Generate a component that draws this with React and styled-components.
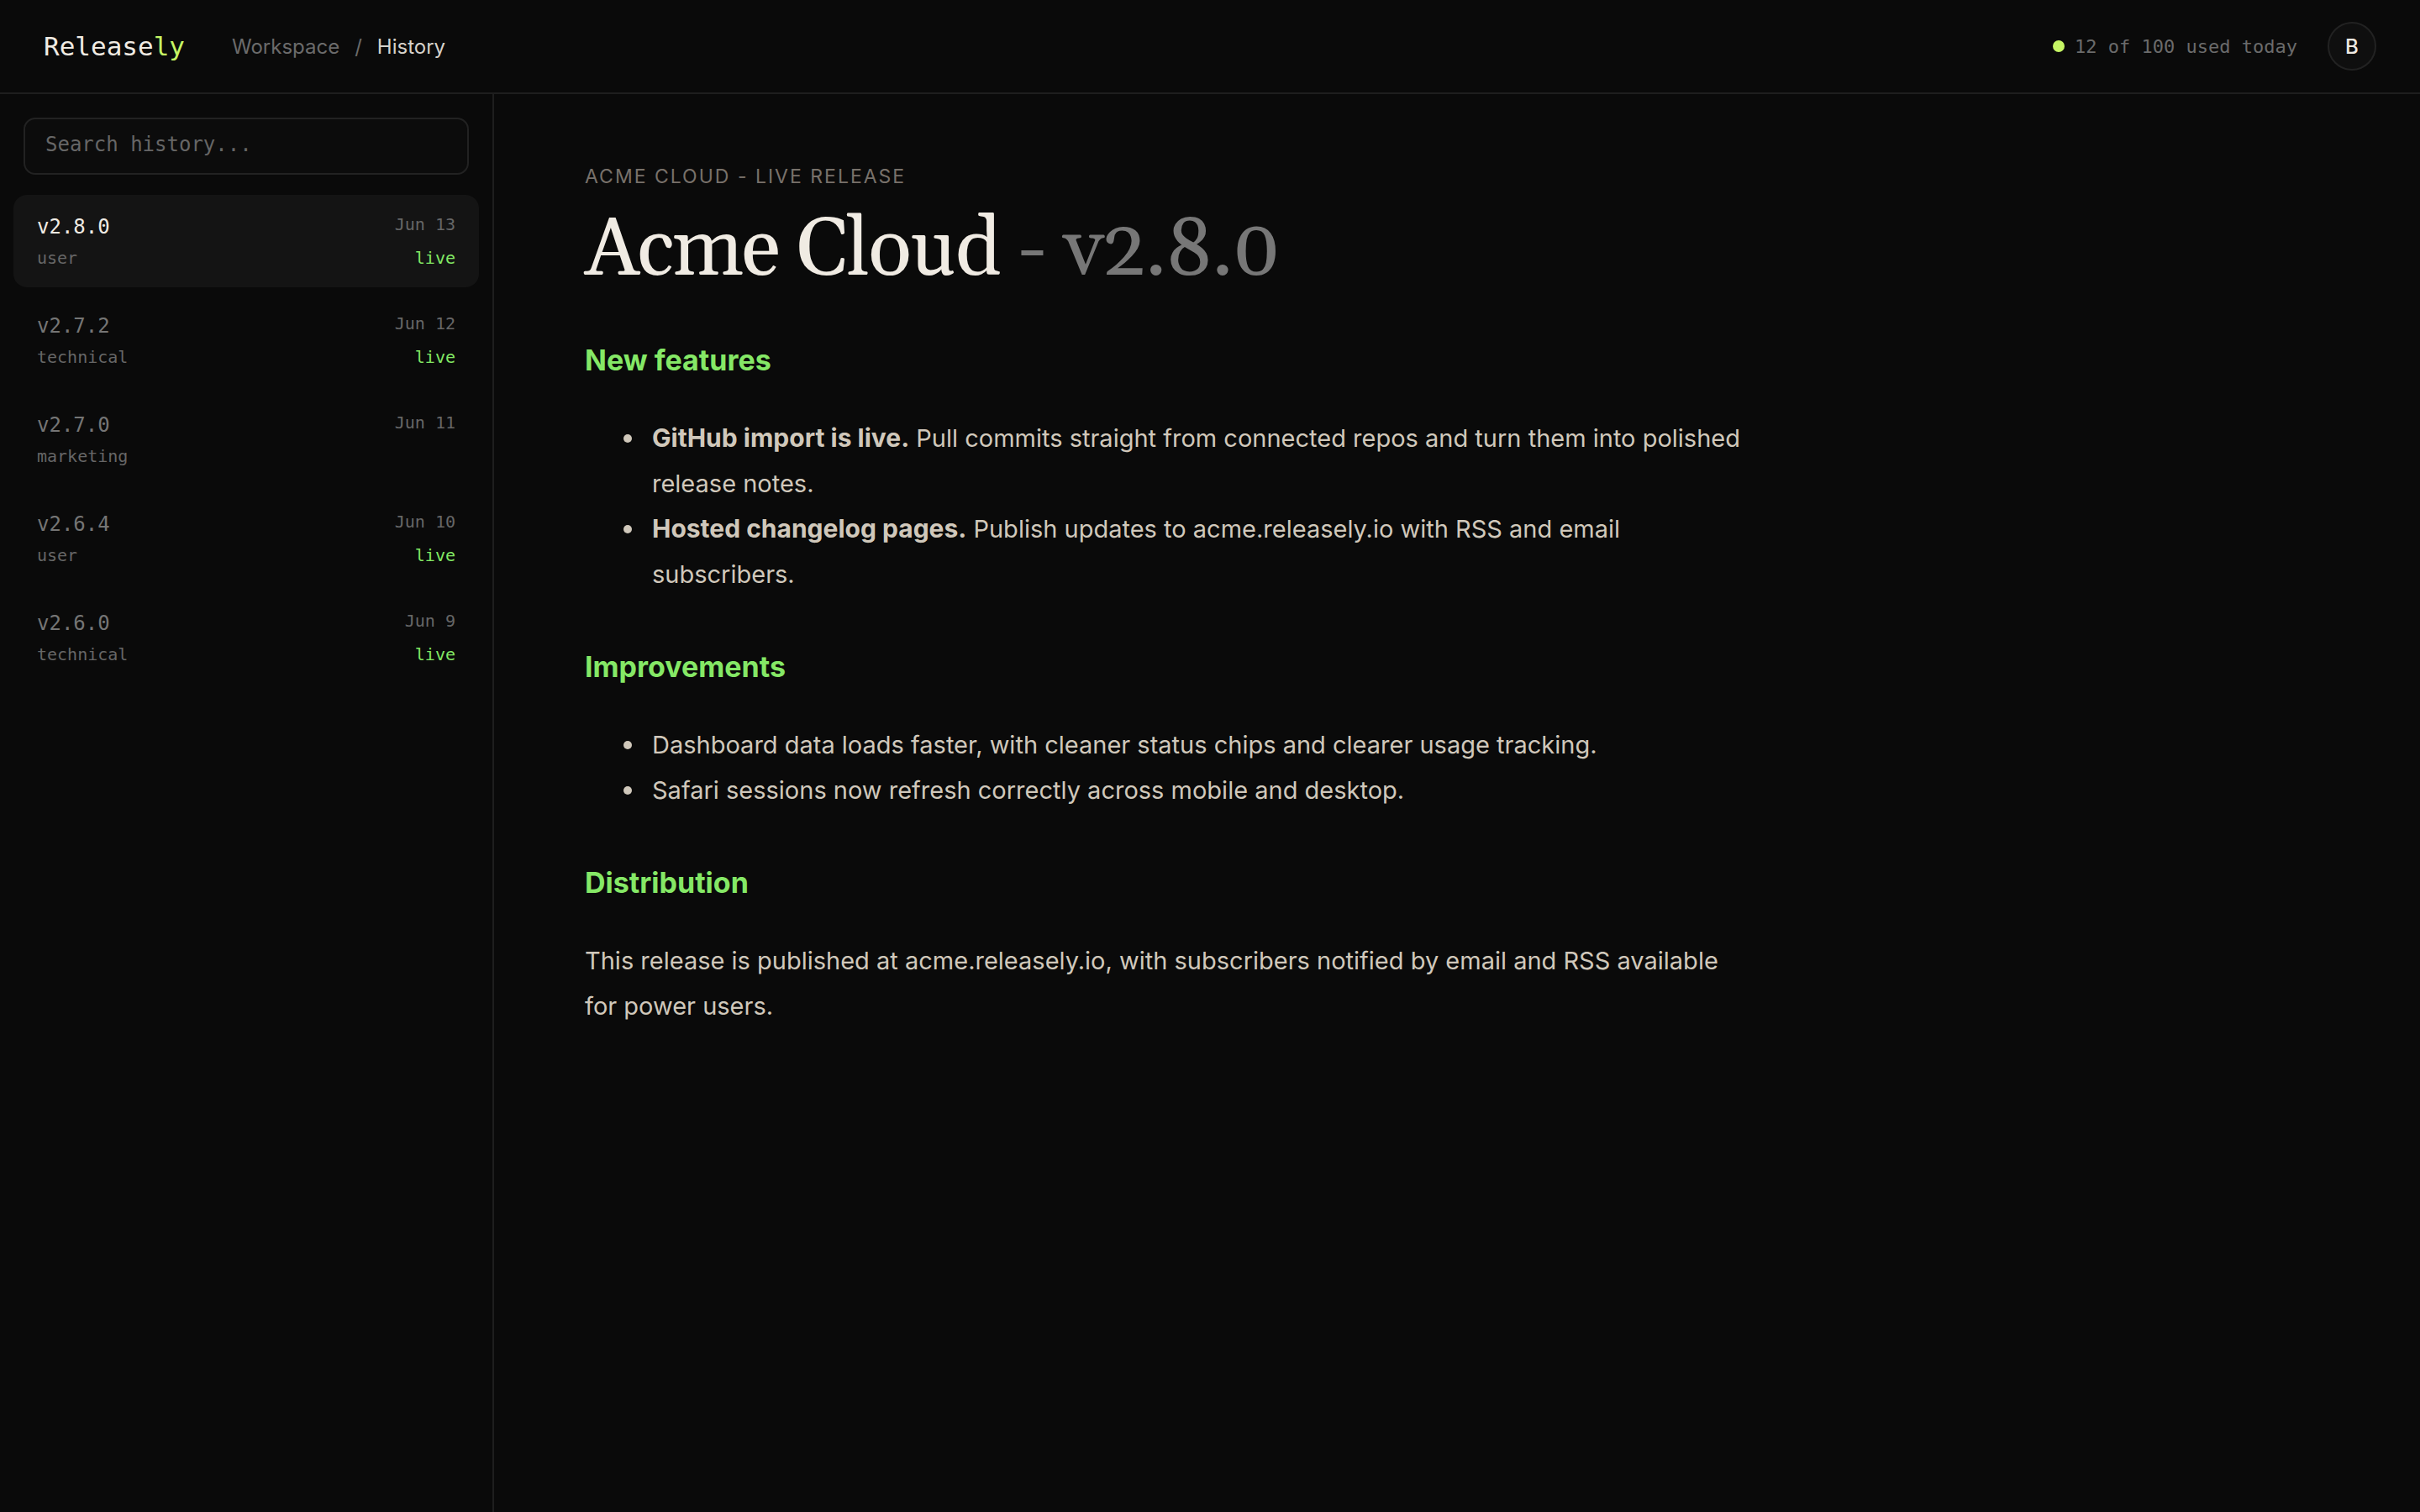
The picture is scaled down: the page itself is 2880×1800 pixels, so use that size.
import React, { useState } from "react";
import styled, { createGlobalStyle } from "styled-components";

const sans = `Inter, "Liberation Sans", sans-serif`;
const mono = `"DejaVu Sans Mono", "Liberation Mono", monospace`;
const serif = `Georgia, Gelasio, "Liberation Serif", serif`;

const GlobalStyle = createGlobalStyle`
  * {
    box-sizing: border-box;
  }

  body {
    margin: 0;
    background: #0a0a0a;
    color: #f0ebe3;
    font-family: ${sans};
  }
`;

const Page = styled.div`
  min-height: 100vh;
  display: flex;
  flex-direction: column;
`;

const Header = styled.header`
  height: 112px;
  padding: 0 52px;
  display: flex;
  align-items: center;
  border-bottom: 2px solid #1e1e1e;
`;

const Logo = styled.a`
  font-family: ${mono};
  font-size: 31px;
  color: #f0ebe3;
  text-decoration: none;
`;

const LogoAccent = styled.span`
  color: #c6f564;
`;

const Breadcrumb = styled.nav`
  margin-left: 56px;
  display: flex;
  gap: 18px;
  font-size: 24px;
  color: #6b6b6b;
`;

const CrumbLink = styled.a`
  color: inherit;
  text-decoration: none;
`;

const CrumbCurrent = styled.span`
  color: #d6d2cb;
`;

const HeaderRight = styled.div`
  margin-left: auto;
  display: flex;
  align-items: center;
  gap: 36px;
`;

const Usage = styled.div`
  display: flex;
  align-items: center;
  gap: 12px;
  font-family: ${mono};
  font-size: 22px;
  color: #6b6b6b;
`;

const UsageDot = styled.span`
  width: 14px;
  height: 14px;
  border-radius: 50%;
  background: #c6f564;
`;

const Avatar = styled.button`
  width: 58px;
  height: 58px;
  padding: 0;
  border: 2px solid #222222;
  border-radius: 50%;
  background: #0f0f0f;
  color: #f0ebe3;
  font-family: ${sans};
  font-size: 24px;
  font-weight: 500;
  cursor: pointer;
`;

const Body = styled.div`
  flex: 1;
  display: flex;
`;

const Sidebar = styled.aside`
  width: 588px;
  flex-shrink: 0;
  padding: 28px 16px;
  border-right: 2px solid #1e1e1e;
`;

const SearchBox = styled.div`
  padding: 0 12px;
  margin-bottom: 24px;
`;

const SearchInput = styled.input`
  width: 100%;
  height: 68px;
  padding: 0 24px 4px;
  border: 2px solid #222222;
  border-radius: 14px;
  background: #0c0c0c;
  color: #f0ebe3;
  font-family: ${mono};
  font-size: 24px;
  outline: none;

  &::placeholder {
    color: #666666;
    opacity: 1;
  }
`;

const ReleaseList = styled.ul`
  margin: 0;
  padding: 0;
  list-style: none;
  display: flex;
  flex-direction: column;
  gap: 8px;
`;

const ReleaseItem = styled.button`
  width: 100%;
  padding: 22px 28px;
  display: flex;
  flex-direction: column;
  gap: 8px;
  border: none;
  border-radius: 16px;
  background: ${({ $active }) => ($active ? "#141414" : "transparent")};
  color: ${({ $active }) => ($active ? "#f0ebe3" : "#757575")};
  font-family: ${mono};
  text-align: left;
  cursor: pointer;
`;

const ItemRow = styled.span`
  width: 100%;
  display: flex;
  justify-content: space-between;
  align-items: flex-start;
`;

const Version = styled.span`
  font-size: 24px;
  line-height: 32px;
`;

const Meta = styled.span`
  font-size: 20px;
  line-height: 26px;
  color: ${({ $live }) => ($live ? "#82e864" : "#666666")};
`;

const Main = styled.main`
  flex: 1;
  padding: 80px 108px;
`;

const Article = styled.article`
  max-width: 1386px;
  color: #d0c8bb;
  font-size: 29px;
  line-height: 54px;
`;

const Eyebrow = styled.p`
  margin: 0 0 18px;
  font-size: 23px;
  line-height: 36px;
  letter-spacing: 2px;
  text-transform: uppercase;
  color: #78716a;
`;

const Title = styled.h1`
  margin: 0 0 50px;
  font-family: ${serif};
  font-size: 96px;
  font-weight: 400;
  line-height: 106px;
  letter-spacing: -2px;
  color: #f0ebe3;
`;

const TitleVersion = styled.span`
  color: #777777;
`;

const Section = styled.section`
  & + & {
    margin-top: 56px;
  }
`;

const SectionTitle = styled.h2`
  margin: 0 0 39px;
  font-size: 34px;
  font-weight: 700;
  line-height: 54px;
  color: #85e866;
`;

const Notes = styled.ul`
  margin: 0;
  padding-left: 46px;
  list-style: none;
`;

const Note = styled.li`
  display: flex;
  gap: 24px;

  &::before {
    content: "";
    width: 10px;
    height: 10px;
    margin-top: 22px;
    flex-shrink: 0;
    border-radius: 50%;
    background: currentColor;
  }
`;

const Lead = styled.strong`
  font-size: 30px;
  font-weight: 700;
  line-height: 36px;
`;

const Paragraph = styled.p`
  margin: 0;
`;

const RELEASES = [
  { version: "v2.8.0", date: "Jun 13", audience: "user", live: true },
  { version: "v2.7.2", date: "Jun 12", audience: "technical", live: true },
  { version: "v2.7.0", date: "Jun 11", audience: "marketing", live: false },
  { version: "v2.6.4", date: "Jun 10", audience: "user", live: true },
  { version: "v2.6.0", date: "Jun 9", audience: "technical", live: true },
];

const SECTIONS = [
  {
    title: "New features",
    items: [
      {
        lead: "GitHub import is live.",
        text: "Pull commits straight from connected repos and turn them into polished release notes.",
      },
      {
        lead: "Hosted changelog pages.",
        text: "Publish updates to acme.releasely.io with RSS and email subscribers.",
      },
    ],
  },
  {
    title: "Improvements",
    items: [
      { text: "Dashboard data loads faster, with cleaner status chips and clearer usage tracking." },
      { text: "Safari sessions now refresh correctly across mobile and desktop." },
    ],
  },
  {
    title: "Distribution",
    body: "This release is published at acme.releasely.io, with subscribers notified by email and RSS available for power users.",
  },
];

const App = () => {
  const [selected, setSelected] = useState("v2.8.0");
  const [query, setQuery] = useState("");

  const visible = RELEASES.filter((r) =>
    `${r.version} ${r.audience}`.includes(query.trim().toLowerCase())
  );

  return (
    <Page>
      <GlobalStyle />
      <Header>
        <Logo href="#">
          Release<LogoAccent>ly</LogoAccent>
        </Logo>
        <Breadcrumb aria-label="Breadcrumb">
          <CrumbLink href="#workspace">Workspace</CrumbLink>
          <span>/</span>
          <CrumbCurrent aria-current="page">History</CrumbCurrent>
        </Breadcrumb>
        <HeaderRight>
          <Usage>
            <UsageDot />
            <span>12 of 100 used today</span>
          </Usage>
          <Avatar type="button">B</Avatar>
        </HeaderRight>
      </Header>

      <Body>
        <Sidebar>
          <SearchBox>
            <SearchInput
              type="text"
              aria-label="Search history"
              placeholder="Search history..."
              value={query}
              onChange={(e) => setQuery(e.target.value)}
            />
          </SearchBox>
          <ReleaseList>
            {visible.map((release) => (
              <li key={release.version}>
                <ReleaseItem
                  type="button"
                  $active={release.version === selected}
                  onClick={() => setSelected(release.version)}
                >
                  <ItemRow>
                    <Version>{release.version}</Version>
                    <Meta>{release.date}</Meta>
                  </ItemRow>
                  <ItemRow>
                    <Meta>{release.audience}</Meta>
                    {release.live && <Meta $live>live</Meta>}
                  </ItemRow>
                </ReleaseItem>
              </li>
            ))}
          </ReleaseList>
        </Sidebar>

        <Main>
          <Article>
            <Eyebrow>Acme Cloud - Live release</Eyebrow>
            <Title>
              Acme Cloud <TitleVersion>- v2.8.0</TitleVersion>
            </Title>

            {SECTIONS.map((section) => (
              <Section key={section.title}>
                <SectionTitle>{section.title}</SectionTitle>
                {section.items && (
                  <Notes>
                    {section.items.map((item) => (
                      <Note key={item.text}>
                        <span>
                          {item.lead && <Lead>{item.lead}</Lead>} {item.text}
                        </span>
                      </Note>
                    ))}
                  </Notes>
                )}
                {section.body && <Paragraph>{section.body}</Paragraph>}
              </Section>
            ))}
          </Article>
        </Main>
      </Body>
    </Page>
  );
};

export default App;
